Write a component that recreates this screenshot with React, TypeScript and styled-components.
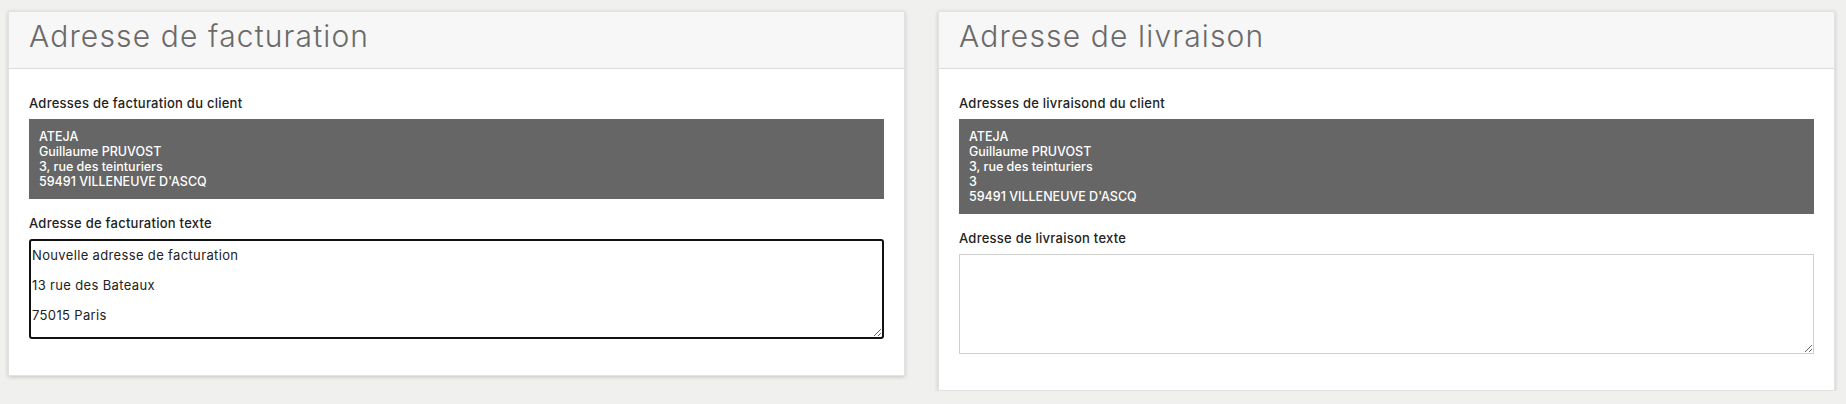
import React, { useState } from "react";
import styled, { createGlobalStyle } from "styled-components";

const GlobalStyle = createGlobalStyle`
  html, body {
    margin: 0;
    padding: 0;
    background: #f0f0ef;
    font-family: Inter, "Open Sans", sans-serif;
  }
`;

const Page = styled.div`
  display: grid;
  grid-template-columns: 1fr 1fr;
  column-gap: 33px;
  align-items: start;
  padding: 11px 11px 0 8px;
`;

const Card = styled.section`
  background: #fff;
  border: 1px solid #e2e2e2;
  box-shadow: 0 1px 4px rgba(0, 0, 0, 0.18);
`;

const CardHeader = styled.header`
  box-sizing: border-box;
  height: 57px;
  display: flex;
  align-items: center;
  padding: 0 20px 9px;
  background: #f7f7f7;
  border-bottom: 1px solid #dcdcdc;
`;

const Title = styled.h2`
  margin: 0;
  font-size: 30px;
  font-weight: 300;
  color: #6a6a6a;
  letter-spacing: 1.15px;
`;

const CardBody = styled.div`
  display: flex;
  flex-direction: column;
  padding: 25px 20px 36px;
`;

const Label = styled.label<{ $gap?: number }>`
  display: block;
  margin-top: ${({ $gap }) => $gap ?? 0}px;
  margin-bottom: 7px;
  font-size: 13px;
  line-height: 18px;
  font-weight: 500;
  letter-spacing: 0.25px;
  color: #222;
`;

const AddressBox = styled.div`
  background: #666;
  color: #fff;
  padding: 10px;
  font-size: 12.5px;
  line-height: 15px;
  font-weight: 500;
  white-space: pre-line;
`;

const TextArea = styled.textarea<{ $active?: boolean }>`
  display: block;
  box-sizing: border-box;
  width: 100%;
  height: 100px;
  margin: 0;
  padding: 7px 1px;
  font-family: Inter, "Open Sans", sans-serif;
  font-size: 13px;
  line-height: 15px;
  letter-spacing: 0.35px;
  color: #222;
  background: #fff;
  border: ${({ $active }) => ($active ? "2px solid #111" : "1px solid #cfcfcf")};
  border-radius: ${({ $active }) => ($active ? "3px" : "0")};
  outline: none;
  resize: vertical;
`;

type AddressPanelProps = {
  title: string;
  clientLabel: string;
  address: string[];
  textLabel: string;
  initialText: string;
  active?: boolean;
};

const AddressPanel: React.FC<AddressPanelProps> = ({
  title,
  clientLabel,
  address,
  textLabel,
  initialText,
  active,
}) => {
  const [text, setText] = useState(initialText);
  return (
    <Card>
      <CardHeader>
        <Title>{title}</Title>
      </CardHeader>
      <CardBody>
        <Label>{clientLabel}</Label>
        <AddressBox>{address.join("\n")}</AddressBox>
        <Label $gap={15}>{textLabel}</Label>
        <TextArea
          $active={active}
          value={text}
          onChange={(e) => setText(e.target.value)}
        />
      </CardBody>
    </Card>
  );
};

const App: React.FC = () => (
  <>
    <GlobalStyle />
    <Page>
      <AddressPanel
        title="Adresse de facturation"
        clientLabel="Adresses de facturation du client"
        address={["ATEJA", "Guillaume PRUVOST", "3, rue des teinturiers", "59491 VILLENEUVE D'ASCQ"]}
        textLabel="Adresse de facturation texte"
        initialText={"Nouvelle adresse de facturation\n\n13 rue des Bateaux\n\n75015 Paris"}
        active
      />
      <AddressPanel
        title="Adresse de livraison"
        clientLabel="Adresses de livraisond du client"
        address={["ATEJA", "Guillaume PRUVOST", "3, rue des teinturiers", "3", "59491 VILLENEUVE D'ASCQ"]}
        textLabel="Adresse de livraison texte"
        initialText=""
      />
    </Page>
  </>
);

export default App;
